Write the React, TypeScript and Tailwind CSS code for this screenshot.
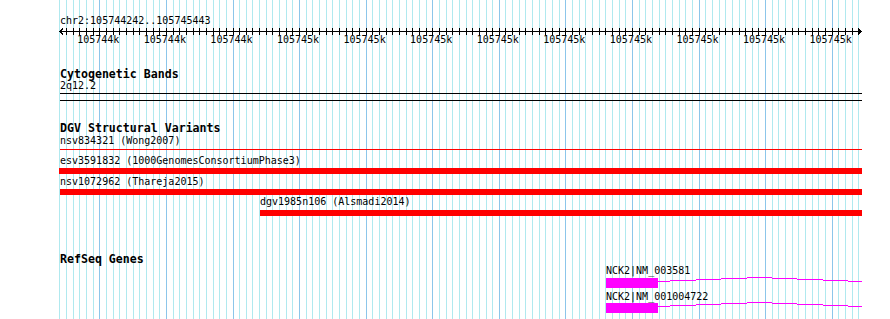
import React from 'react';

const GRID_START = 59.4;
const GRID_STEP = 6.658;
const GRID_COUNT = 121;

const gridX = (i: number) => Math.round(GRID_START + i * GRID_STEP);

const rulerLabels = [
  '105744k', '105744k', '105744k',
  '105745k', '105745k', '105745k', '105745k', '105745k', '105745k', '105745k', '105745k', '105745k',
];

// intron arc, page x ranges with row offsets from the exon top
const intronSteps: [number, number, number][] = [
  [658, 670, 4],
  [670, 696, 3],
  [696, 721, 2],
  [721, 747, 1],
  [747, 772, 0],
  [772, 797, 1],
  [797, 823, 2],
  [823, 848, 3],
  [848, 862, 4],
];

const GridBackground: React.FC = () => (
  <svg className="absolute inset-0 pointer-events-none" width={890} height={319} shapeRendering="crispEdges">
    {Array.from({ length: GRID_COUNT }).map((_, i) => {
      const major = (i - 6) % 10 === 0;
      const x = gridX(i) + 0.5;
      return <line key={i} x1={x} y1={0} x2={x} y2={319} stroke={major ? '#8cc6ea' : '#b0e9ef'} strokeWidth={1} />;
    })}
  </svg>
);

const Axis: React.FC = () => {
  const left = 58;
  return (
    <svg width={806} height={9} className="block -ml-[2px]" shapeRendering="crispEdges">
      <line x1={60 - left} y1={5.5} x2={862 - left} y2={5.5} stroke="#000" strokeWidth={1} />
      {Array.from({ length: GRID_COUNT }).map((_, i) => {
        const x = gridX(i) - left + 0.5;
        if (gridX(i) < 62 || gridX(i) > 858) return null;
        return <line key={i} x1={x} y1={2} x2={x} y2={9} stroke="#000" strokeWidth={1} />;
      })}
      <polyline points={`${63 - left},2.5 ${60 - left},5.5 ${63 - left},8.5`} fill="none" stroke="#000" strokeWidth={1} />
      <polyline points={`${858 - left},2.5 ${861 - left},5.5 ${858 - left},8.5`} fill="none" stroke="#000" strokeWidth={1} />
    </svg>
  );
};

const GeneModel: React.FC<{ height: number; top: number }> = ({ height, top }) => {
  const left = 606;
  return (
    <svg width={256} height={height} className="block ml-[546px]" shapeRendering="crispEdges">
      <rect x={0} y={top} width={52} height={10} fill="#ff00ff" />
      {intronSteps.map(([x1, x2, dy], i) => {
        const y = top - 1 + dy + 0.5;
        return <line key={i} x1={x1 - left} y1={y} x2={x2 - left} y2={y} stroke="#ff00ff" strokeWidth={1} />;
      })}
    </svg>
  );
};

const App: React.FC = () => {
  return (
    <div className="relative w-[890px] h-[319px] overflow-hidden bg-white text-black font-['DejaVu_Sans_Mono','Liberation_Mono',monospace]">
      <GridBackground />
      <div className="relative pl-[60px] text-[10px] leading-[10px]">
        {/* ruler */}
        <div className="mt-[16px] h-[10px] whitespace-nowrap">chr2:105744242..105745443</div>
        <Axis />
        <div className="flex h-[10px] ml-[5px]">
          {rulerLabels.map((l, i) => (
            <div key={i} className="w-[66.58px] shrink-0 text-center">{l}</div>
          ))}
        </div>

        {/* cytogenetic bands */}
        <div className="mt-[23px] h-[12px] text-[11.6px] leading-[12px] font-bold">Cytogenetic Bands</div>
        <div className="mt-[1px] h-[10px]">2q12.2</div>
        <div className="mt-[2px] h-px w-[802px] bg-black" />
        <div className="mt-[6px] h-px w-[802px] bg-black" />

        {/* DGV */}
        <div className="mt-[21px] h-[12px] text-[11.6px] leading-[12px] font-bold">DGV Structural Variants</div>
        <div className="mt-[2px] h-[10px]">nsv834321 (Wong2007)</div>
        <div className="mt-[3px] h-px w-[802px] bg-[#ff0000]" />
        <div className="mt-[6px] h-[10px]">esv3591832 (1000GenomesConsortiumPhase3)</div>
        <div className="mt-[2px] h-[6px] w-[803px] -ml-[1px] bg-[#ff0000]" />
        <div className="mt-[3px] h-[10px]">nsv1072962 (Thareja2015)</div>
        <div className="mt-[2px] h-[6px] w-[802px] bg-[#ff0000]" />
        <div className="mt-[2px] h-[10px] ml-[200px]">dgv1985n106 (Alsmadi2014)</div>
        <div className="mt-[3px] h-[6px] w-[602px] ml-[200px] bg-[#ff0000]" />

        {/* RefSeq */}
        <div className="mt-[37px] h-[12px] text-[11.6px] leading-[12px] font-bold">RefSeq Genes</div>
        <div className="mt-[1px] h-[10px] ml-[546px]">NCK2|NM_003581</div>
        <GeneModel height={13} top={2} />
        <div className="mt-[3px] h-[10px] ml-[546px]">NCK2|NM_001004722</div>
        <GeneModel height={12} top={1} />
      </div>
    </div>
  );
};

export default App;
